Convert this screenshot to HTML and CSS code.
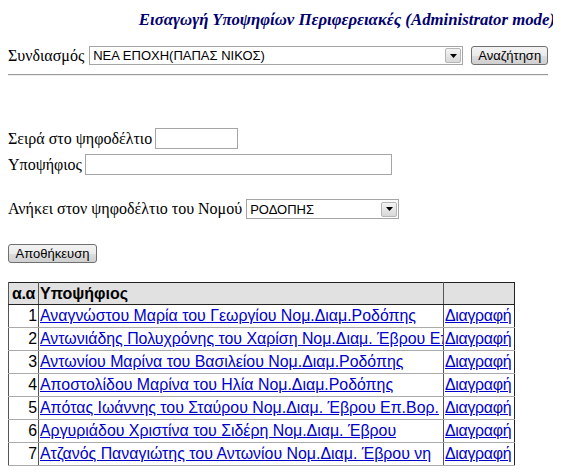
FILE: index.html
```html
<!DOCTYPE html>
<html>
<head>
<meta charset="utf-8">
<link rel="stylesheet" href="styles.css">
</head>
<body>
<div class="title-bar"><span class="title">Εισαγωγή Υποψηφίων Περιφερειακές (Administrator mode)</span></div>

<div class="row row-search">
  <span class="label">Συνδιασμός</span>
  <span class="select select-wide">
    <select class="select-native"><option>ΝΕΑ ΕΠΟΧΗ(ΠΑΠΑΣ ΝΙΚΟΣ)</option></select>
    <span class="select-arrow"><svg width="7" height="4" viewBox="0 0 7 4"><path d="M0 0H7L3.5 4Z" fill="#000"/></svg></span>
  </span>
  <button class="btn btn-search">Αναζήτηση</button>
</div>
<hr class="rule">

<div class="row row-order">
  <span class="label">Σειρά στο ψηφοδέλτιο</span>
  <input class="text text-short" type="text">
</div>
<div class="row row-cand">
  <span class="label">Υποψήφιος</span>
  <input class="text text-long" type="text">
</div>

<div class="row row-nomos">
  <span class="label">Ανήκει στον ψηφοδέλτιο του Νομού</span>
  <span class="select select-nomos">
    <select class="select-native"><option>ΡΟΔΟΠΗΣ</option></select>
    <span class="select-arrow"><svg width="7" height="4" viewBox="0 0 7 4"><path d="M0 0H7L3.5 4Z" fill="#000"/></svg></span>
  </span>
</div>

<div class="row row-save">
  <button class="btn btn-save">Αποθήκευση</button>
</div>

<table class="grid">
  <colgroup><col class="c1"><col class="c2"><col class="c3"></colgroup>
  <thead>
    <tr><th class="num">α.α</th><th>Υποψήφιος</th><th></th></tr>
  </thead>
  <tbody>
    <tr><td class="num">1</td><td><a href="#">Αναγνώστου Μαρία του Γεωργίου Νομ.Διαμ.Ροδόπης</a></td><td><a href="#">Διαγραφή</a></td></tr>
    <tr><td class="num">2</td><td><a href="#">Αντωνιάδης Πολυχρόνης του Χαρίση Νομ.Διαμ. Έβρου Επ.Βορ.</a></td><td><a href="#">Διαγραφή</a></td></tr>
    <tr><td class="num">3</td><td><a href="#">Αντωνίου Μαρίνα του Βασιλείου Νομ.Διαμ.Ροδόπης</a></td><td><a href="#">Διαγραφή</a></td></tr>
    <tr><td class="num">4</td><td><a href="#">Αποστολίδου Μαρίνα του Ηλία Νομ.Διαμ.Ροδόπης</a></td><td><a href="#">Διαγραφή</a></td></tr>
    <tr><td class="num">5</td><td><a href="#">Απότας Ιωάννης του Σταύρου Νομ.Διαμ. Έβρου Επ.Βορ.</a></td><td><a href="#">Διαγραφή</a></td></tr>
    <tr><td class="num">6</td><td><a href="#">Αργυριάδου Χριστίνα του Σιδέρη Νομ.Διαμ. Έβρου</a></td><td><a href="#">Διαγραφή</a></td></tr>
    <tr><td class="num">7</td><td><a href="#">Ατζανός Παναγιώτης του Αντωνίου Νομ.Διαμ. Έβρου νη</a></td><td><a href="#">Διαγραφή</a></td></tr>
  </tbody>
</table>
</body>
</html>
```

FILE: styles.css
```css
html, body { background: #fff; overflow: hidden; }
body {
  margin: 8px;
  font-family: "Liberation Serif", "Times New Roman", serif;
  font-size: 16px;
  color: #000;
}
.title-bar {
  display: flex;
  justify-content: flex-end;
  margin-right: -4px;
  padding-top: 2px;
}
.title {
  white-space: nowrap;
  font-weight: bold;
  font-style: italic;
  font-size: 16.8px;
  line-height: 20px;
  color: #00006e;
  padding-right: 2px;
}
.row {
  display: flex;
  align-items: center;
}
.label { white-space: nowrap; }
.row-search { margin-top: 16px; }
.row-search .label { margin-right: 5px; }

.select {
  display: inline-flex;
  align-items: center;
  border: 1px solid #a5a5a5;
  background: #fff;
  box-sizing: border-box;
}
.select-wide { width: 374px; height: 19px; }
.select-nomos { width: 153px; height: 20px; margin-left: 4px; }
.select-native {
  appearance: none;
  -webkit-appearance: none;
  border: 0;
  outline: 0;
  background: transparent;
  flex: 1;
  min-width: 0;
  font-family: "Liberation Sans", Arial, sans-serif;
  font-size: 13px;
  padding: 0 0 0 3px;
  margin: 0;
  color: #000;
}
.select-arrow {
  width: 16px;
  height: 15px;
  margin-right: 1px;
  box-sizing: border-box;
  border: 1px solid #b5b5b5;
  border-radius: 2px;
  background: linear-gradient(#f4f4f4, #d8d8d8);
  display: flex;
  align-items: center;
  justify-content: center;
}
.btn {
  font-family: "Liberation Sans", Arial, sans-serif;
  font-size: 13px;
  color: #000;
  height: 19px;
  padding: 0 5px;
  border: 1px solid #707070;
  border-radius: 3px;
  background: linear-gradient(#f2f2f2 0%, #ebebeb 50%, #dddddd 51%, #cfcfcf 100%);
  box-sizing: border-box;
  line-height: 16px;
}
.btn-search { margin-left: 8px; width: 77px; }
.rule {
  margin: 9px 0 0 0;
  border: 0;
  border-top: 1px solid #9a9a9a;
  border-bottom: 1px solid #eeeeee;
  width: 540px;
}
.text {
  height: 21px;
  border: 1px solid #a5a5a5;
  box-sizing: border-box;
  padding: 0 2px;
  margin: 0 0 0 3px;
  font-family: "Liberation Sans", Arial, sans-serif;
  font-size: 13px;
}
.text-short { width: 83px; }
.text-long { width: 307px; }
.row-order { margin-top: 52px; }
.row-cand { margin-top: 5px; }
.row-nomos { margin-top: 24px; }
.row-save { margin-top: 25px; }
.btn-save { width: 89px; }

.grid {
  margin-top: 19px;
  border-collapse: collapse;
  table-layout: fixed;
  width: 507px;
  border: 1px solid #222;
  font-family: "Liberation Sans", Arial, sans-serif;
  font-size: 15.9px;
}
.c1 { width: 30px; }
.c2 { width: 405px; }
.c3 { width: 71px; }
.grid th, .grid td {
  white-space: nowrap;
  overflow: hidden;
  padding: 0 1px;
  border-left: 1px solid #555;
  border-bottom: 1px solid #aaa;
  text-align: left;
}
.grid th {
  background: #e1e1e1;
  font-weight: bold;
  font-size: 16px;
  height: 21px;
  line-height: 21px;
  border-bottom: 1px solid #222;
}
.grid th.num { padding: 0; text-align: center; letter-spacing: -0.3px; }
.grid td {
  height: 22px;
  line-height: 22px;
}
.grid td.num { text-align: right; padding-right: 1px; }
.grid td:nth-child(3) { letter-spacing: -0.3px; }
.grid a { color: #0000cc; text-decoration: underline; }
```
